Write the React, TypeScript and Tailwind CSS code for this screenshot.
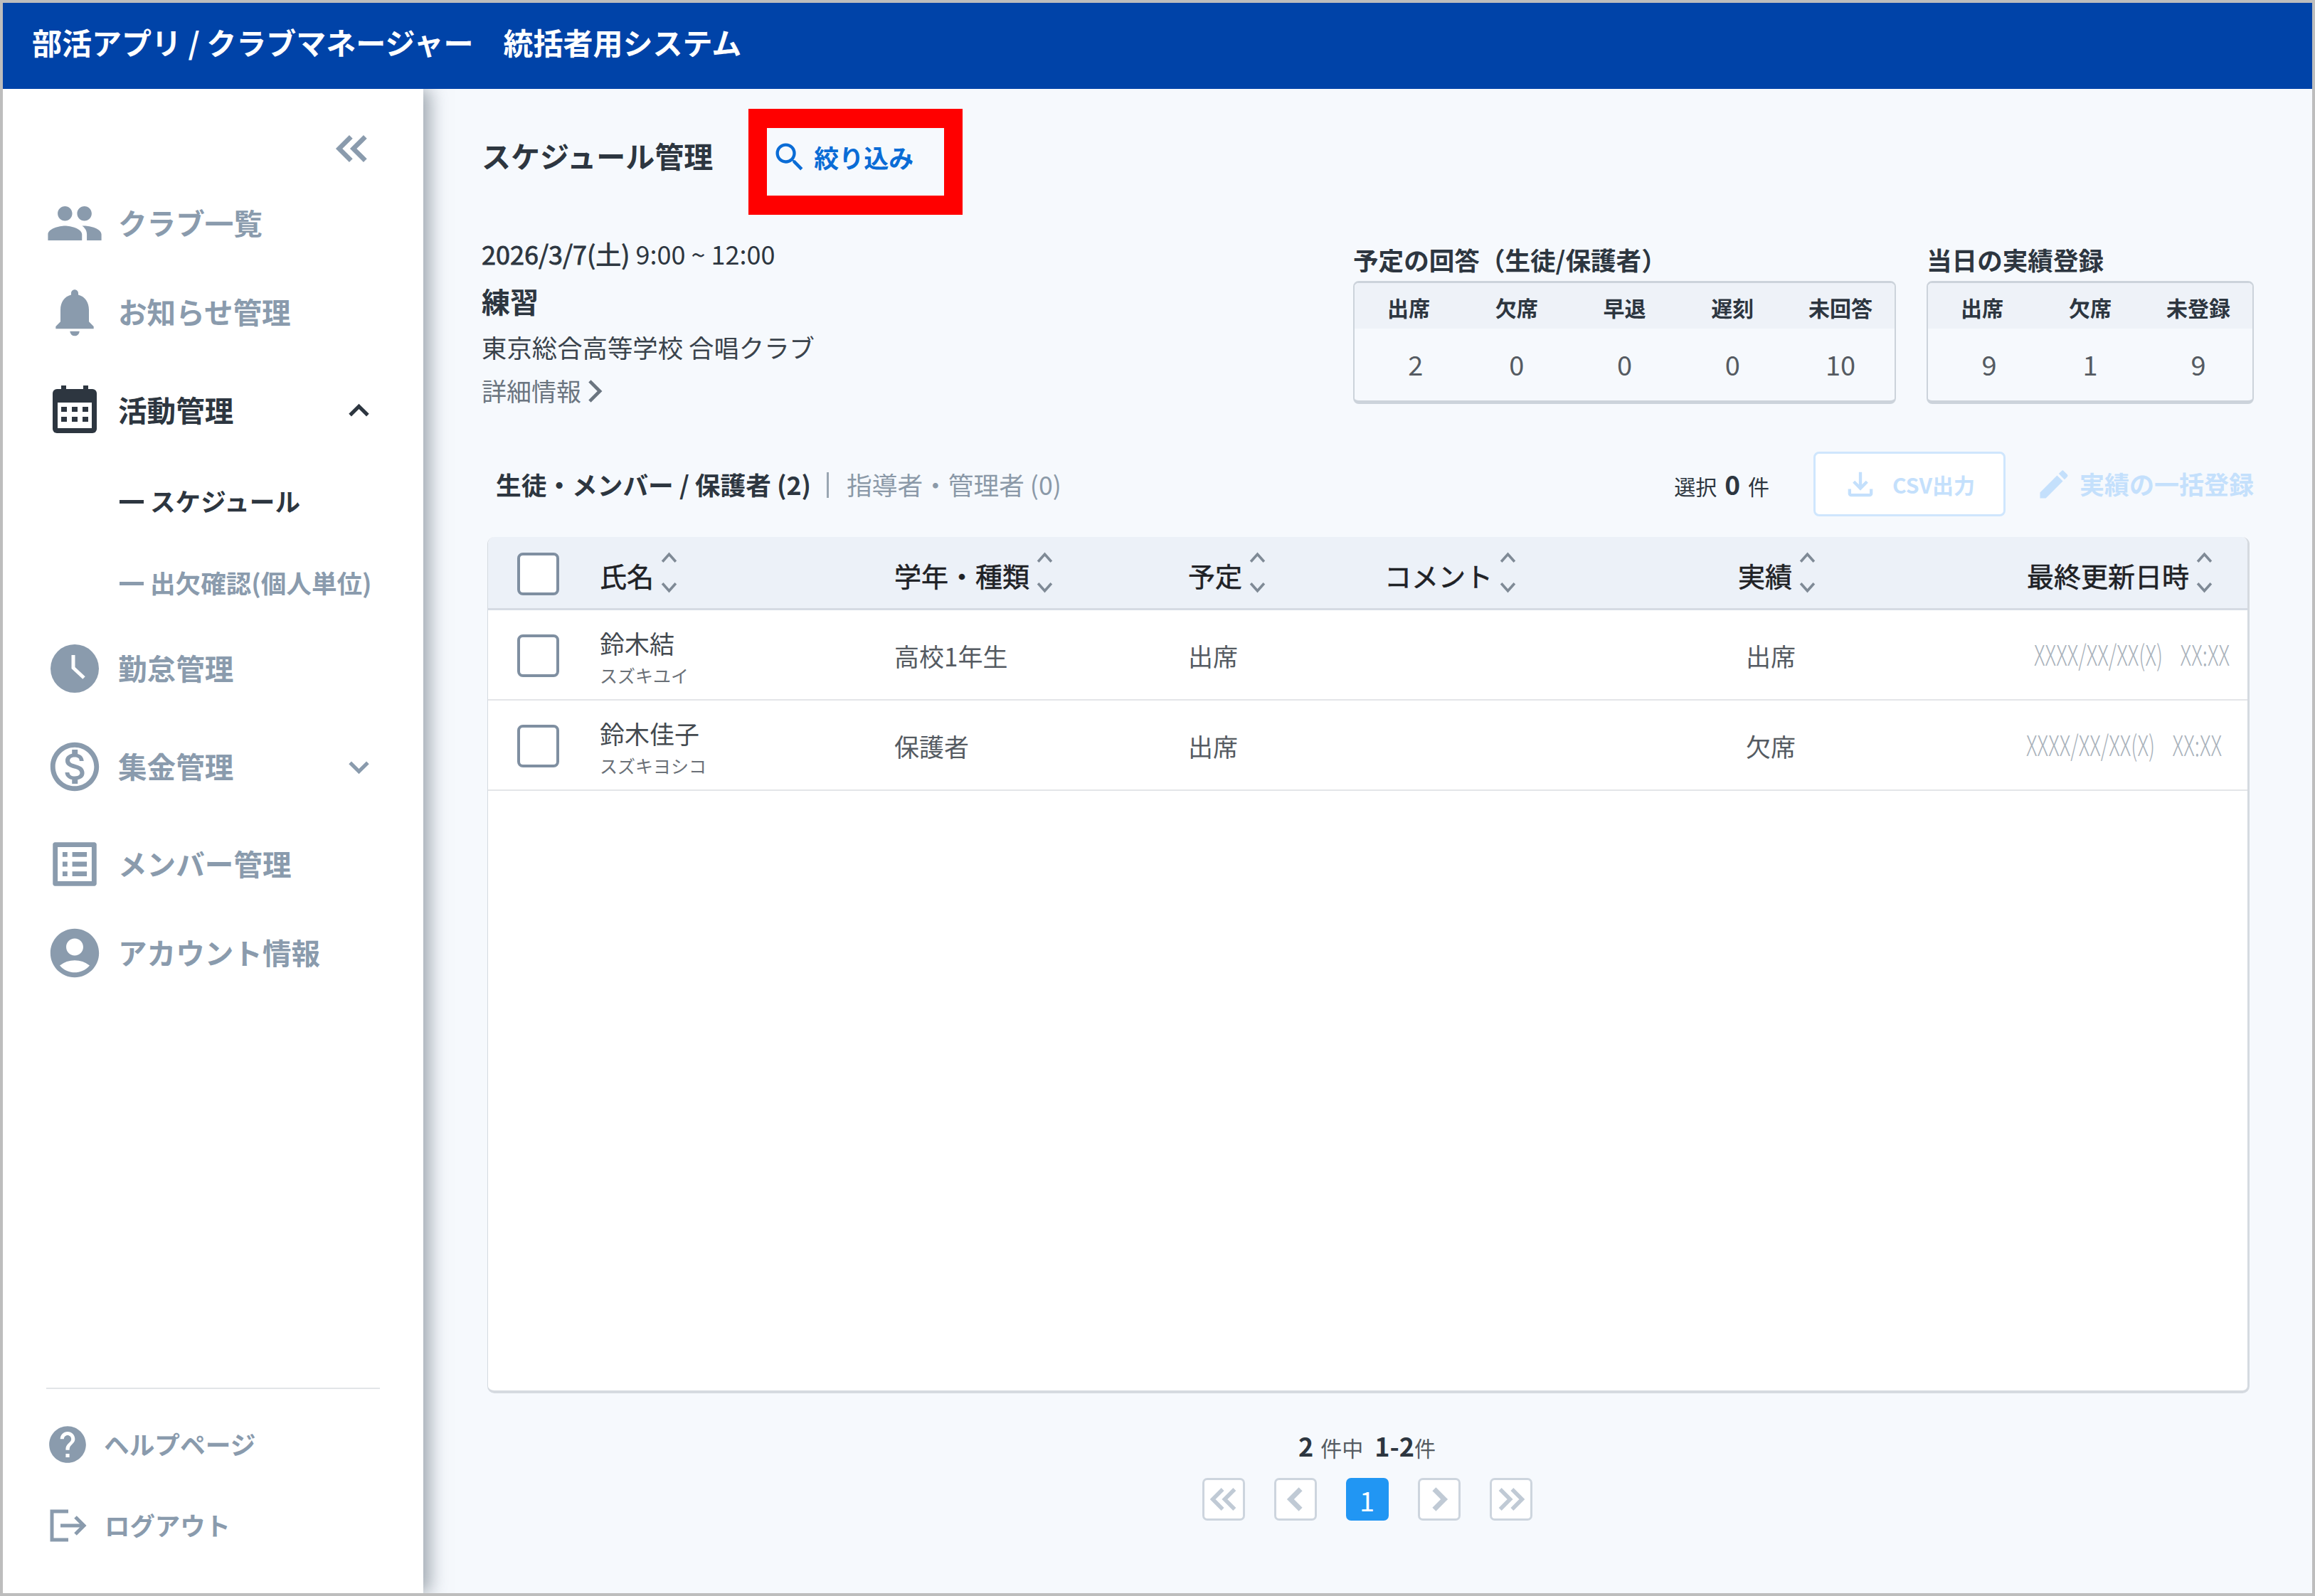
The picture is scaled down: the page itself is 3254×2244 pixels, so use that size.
import type { ReactNode } from "react";
import {
  MdPeople,
  MdNotifications,
  MdOutlineMonetizationOn,
  MdOutlineListAlt,
  MdAccountCircle,
  MdHelp,
  MdSearch,
  MdEdit,
} from "react-icons/md";

const SLATE = "#8a9bad";
const DARK = "#2d3640";

function Chevron({
  dir,
  className,
  sw = 5,
}: {
  dir: "up" | "down" | "left" | "right";
  className?: string;
  sw?: number;
}) {
  const pts = {
    up: "3,17 15,5 27,17",
    down: "3,5 15,17 27,5",
    left: "17,3 5,15 17,27",
    right: "5,3 17,15 5,27",
  }[dir];
  const box = dir === "up" || dir === "down" ? "0 0 30 22" : "0 0 22 30";
  return (
    <svg viewBox={box} className={className} fill="none" stroke="currentColor" strokeWidth={sw}>
      <polyline points={pts} />
    </svg>
  );
}

function DoubleChevron({ dir, className }: { dir: "left" | "right"; className?: string }) {
  const a = dir === "left" ? "20,3 5,18 20,33" : "5,3 20,18 5,33";
  const b = dir === "left" ? "38,3 23,18 38,33" : "23,3 38,18 23,33";
  return (
    <svg viewBox="0 0 43 36" className={className} fill="none" stroke="currentColor" strokeWidth="6">
      <polyline points={a} />
      <polyline points={b} />
    </svg>
  );
}

function CalendarIcon() {
  return (
    <svg viewBox="0 0 62 67" className="w-[62px] h-[67px] -mt-[4px]" fill="#2d3640">
      <rect x="12" y="0" width="7" height="12" />
      <rect x="43" y="0" width="7" height="12" />
      <rect x="0" y="5" width="62" height="62" rx="6" />
      <rect x="7" y="24" width="48" height="36" fill="#ffffff" />
      <rect x="12" y="30" width="8" height="7" />
      <rect x="27" y="30" width="8" height="7" />
      <rect x="42" y="30" width="8" height="7" />
      <rect x="12" y="44" width="8" height="7" />
      <rect x="27" y="44" width="8" height="7" />
      <rect x="42" y="44" width="8" height="7" />
    </svg>
  );
}

function ClockIcon() {
  return (
    <svg viewBox="0 0 68 68" className="w-[68px] h-[68px]">
      <circle cx="34" cy="34" r="34" fill={SLATE} />
      <polyline points="32,15 32,33 47,47" fill="none" stroke="#ffffff" strokeWidth="5" />
    </svg>
  );
}

function LogoutIcon() {
  return (
    <svg viewBox="0 0 52 46" className="w-[52px] h-[46px]" fill="none" stroke={SLATE} strokeWidth="5">
      <polyline points="26,3 3,3 3,43 26,43" />
      <line x1="15" y1="23" x2="47" y2="23" />
      <polyline points="36,11 48,23 36,35" />
    </svg>
  );
}

function DownloadIcon() {
  return (
    <svg viewBox="0 0 24 24" className="w-[52px] h-[52px]" fill="#c4e0fc">
      <path d="M18 15v3H6v-3H4v3c0 1.1.9 2 2 2h12c1.1 0 2-.9 2-2v-3h-2zm-1-4l-1.41-1.41L13 12.17V4h-2v8.17L8.41 9.59 7 11l5 5 5-5z" />
    </svg>
  );
}

function NavItem({
  h,
  icon,
  label,
  active,
  trailing,
}: {
  h: string;
  icon: ReactNode;
  label: string;
  active?: boolean;
  trailing?: "up" | "down";
}) {
  return (
    <div className={`${h} flex items-center pl-[60px] pr-[75px]`}>
      <span className="w-[82px] flex justify-center items-center shrink-0">{icon}</span>
      <span
        className={`ml-[20px] flex-1 pb-[2px] text-[40.6px] font-bold ${active ? "text-[#2d3640]" : "text-[#8a9bad]"}`}
      >
        {label}
      </span>
      {trailing && (
        <Chevron
          dir={trailing}
          className={`w-[31px] h-[23px] ${active ? "text-[#2d3640]" : "text-[#8a9bad]"}`}
        />
      )}
    </div>
  );
}

function SubItem({ h, label, active }: { h: string; label: string; active?: boolean }) {
  return (
    <div
      className={`${h} flex items-center pl-[164px] text-[35.6px] font-bold whitespace-nowrap ${
        active ? "text-[#2d3640]" : "text-[#8a9bad]"
      }`}
    >
      <span className="w-[34px] h-[5px] bg-current mr-[9px]" />
      <span className="pb-[2px]">{label}</span>
    </div>
  );
}

function Sidebar() {
  return (
    <aside className="w-[591px] shrink-0 bg-white flex flex-col relative z-10 shadow-[9px_0_24px_rgba(70,84,98,0.5)]">
      <div className="mt-[44px] h-[80px] flex items-center justify-end pr-[76px]">
        <DoubleChevron dir="left" className="w-[48px] h-[40px] text-[#8a9bad]" />
      </div>
      <NavItem h="h-[130px]" icon={<MdPeople size={84} color={SLATE} />} label="クラブ一覧" />
      <NavItem h="h-[120px]" icon={<MdNotifications size={80} color={SLATE} />} label="お知らせ管理" />
      <NavItem h="h-[156px]" icon={<CalendarIcon />} label="活動管理" active trailing="up" />
      <SubItem h="h-[100px]" label="スケジュール" active />
      <SubItem h="h-[130px]" label="出欠確認(個人単位)" />
      <NavItem h="h-[110px]" icon={<ClockIcon />} label="勤怠管理" />
      <NavItem
        h="h-[166px]"
        icon={<MdOutlineMonetizationOn size={82} color={SLATE} />}
        label="集金管理"
        trailing="down"
      />
      <NavItem h="h-[108px]" icon={<MdOutlineListAlt size={82} color={SLATE} />} label="メンバー管理" />
      <NavItem h="h-[142px]" icon={<MdAccountCircle size={82} color={SLATE} />} label="アカウント情報" />
      <div className="flex-1" />
      <div className="ml-[61px] w-[469px] border-t-[2px] border-[#e2e5e8]" />
      <div className="h-[156px] flex items-center pl-[60px]">
        <MdHelp size={62} color={SLATE} />
        <span className="ml-[20px] pb-[3px] text-[35.7px] font-bold text-[#8a9bad]">ヘルプページ</span>
      </div>
      <div className="h-[72px] flex items-center pl-[66px]">
        <LogoutIcon />
        <span className="ml-[25px] pb-[3px] text-[35.4px] font-bold text-[#8a9bad]">ログアウト</span>
      </div>
      <div className="h-[59px]" />
    </aside>
  );
}

function SummaryBox({
  title,
  cols,
  width,
  grid,
}: {
  title: string;
  cols: { label: string; value: string; shift: string }[];
  width: string;
  grid: string;
}) {
  return (
    <div className={`${width} mt-[12px]`}>
      <div className="h-[40px] leading-[40px] text-[35.6px] font-bold text-[#2d3640] whitespace-nowrap">
        {title}
      </div>
      <div className="mt-[10px] h-[173px] rounded-[8px] border-x-[2px] border-t-[3px] border-b-[5px] border-[#ccd3db] overflow-hidden">
        <div className={`h-[64px] bg-[#eef2f8] ${grid} pt-[5px]`}>
          {cols.map((c) => (
            <div
              key={c.label}
              className="flex items-center justify-center text-[30px] font-bold text-[#2d3640]"
            >
              {c.label}
            </div>
          ))}
        </div>
        <div className={`${grid} pt-[27px]`}>
          {cols.map((c) => (
            <div key={c.label} className={`text-center text-[38px] leading-[46px] text-[#555b62] ${c.shift}`}>
              {c.value}
            </div>
          ))}
        </div>
      </div>
    </div>
  );
}

function SortArrows() {
  return (
    <span className="ml-[9px] flex flex-col gap-[28px] text-[#7f8a96]">
      <svg viewBox="0 0 24 14" className="w-[25px] h-[15px]" fill="none" stroke="currentColor" strokeWidth="3.5">
        <polyline points="3,13 12,3 21,13" />
      </svg>
      <svg viewBox="0 0 24 14" className="w-[25px] h-[15px]" fill="none" stroke="currentColor" strokeWidth="3.5">
        <polyline points="3,1 12,11 21,1" />
      </svg>
    </span>
  );
}

function HeadCell({ label }: { label: string }) {
  return (
    <div className="flex items-center text-[38px] text-[#1f2226] whitespace-nowrap">
      <span className="pt-[6px] [-webkit-text-stroke:0.6px_currentColor]">{label}</span>
      <SortArrows />
    </div>
  );
}

function Checkbox({ className }: { className?: string }) {
  return (
    <div
      className={`w-[59px] h-[60px] mt-[3px] rounded-[8px] border-[4px] border-[#7f8fa1] bg-white ml-[41px] ${className ?? ""}`}
    />
  );
}

const GRID = "grid grid-cols-[157px_414px_413px_276px_497px_406px_minmax(0,1fr)]";

const rows = [
  { name: "鈴木結", kana: "スズキユイ", grade: "高校1年生", plan: "出席", actual: "出席", dateShift: "ml-[10px]" },
  { name: "鈴木佳子", kana: "スズキヨシコ", grade: "保護者", plan: "出席", actual: "欠席", dateShift: "-ml-[1px]" },
];

function MemberTable() {
  return (
    <div className="ml-[8px] mr-[6px] mt-[29px] h-[1204px] bg-white rounded-[10px] overflow-hidden border-r-[3px] border-b-[4px] border-l-[1px] border-[#d5dae0]">
      <div className={`${GRID} h-[103px] items-center bg-[#ecf1f8] border-b-[3px] border-[#d5dbe3]`}>
        <Checkbox />
        <HeadCell label="氏名" />
        <HeadCell label="学年・種類" />
        <HeadCell label="予定" />
        <HeadCell label="コメント" />
        <HeadCell label="実績" />
        <HeadCell label="最終更新日時" />
      </div>
      {rows.map((r) => (
        <div key={r.name} className={`${GRID} h-[127px] items-center border-b-[2px] border-[#e3e5e8]`}>
          <Checkbox />
          <div className="self-start pt-[21px]">
            <div className="h-[50px] leading-[50px] text-[35px] text-[#444a50]">{r.name}</div>
            <div className="h-[40px] leading-[40px] text-[25px] text-[#6a7077]">{r.kana}</div>
          </div>
          <div className="pt-[4px] text-[35px] text-[#555b62]">{r.grade}</div>
          <div className="pt-[4px] text-[35px] text-[#555b62]">{r.plan}</div>
          <div />
          <div className="pt-[4px] pl-[11px] text-[35px] text-[#555b62]">{r.actual}</div>
          <div
            className={`${r.dateShift} -mt-[3px] text-[40px] font-light text-[#a9b2bb] whitespace-nowrap origin-left scale-x-[0.72]`}
          >
            XXXX/XX/XX(X)<span className="ml-[34px]">XX:XX</span>
          </div>
        </div>
      ))}
    </div>
  );
}

function PageButton({ children, active }: { children: ReactNode; active?: boolean }) {
  return (
    <div
      className={`w-[60px] h-[60px] rounded-[7px] border-[3px] flex items-center justify-center ${
        active ? "bg-[#2196f3] border-[#2196f3] text-white text-[38px]" : "bg-white border-[#cdd5de] text-[#c0cad5]"
      }`}
    >
      {children}
    </div>
  );
}

function Pagination() {
  return (
    <div className="ml-[8px] mr-[10px] flex flex-col items-center">
      <div className="mt-[50px] h-[46px] leading-[46px] text-[30px] text-[#555b62] whitespace-nowrap">
        <span className="text-[36px] font-bold text-[#2d3640]">2</span>
        <span className="ml-[10px]">件中</span>
        <span className="ml-[16px] text-[36px] font-bold text-[#2d3640]">1-2</span>件
      </div>
      <div className="mt-[23px] flex gap-[41px]">
        <PageButton>
          <DoubleChevron dir="left" className="w-[40px] h-[34px]" />
        </PageButton>
        <PageButton>
          <Chevron dir="left" sw={6} className="w-[26px] h-[36px]" />
        </PageButton>
        <PageButton active>1</PageButton>
        <PageButton>
          <Chevron dir="right" sw={6} className="w-[26px] h-[36px]" />
        </PageButton>
        <PageButton>
          <DoubleChevron dir="right" className="w-[40px] h-[34px]" />
        </PageButton>
      </div>
    </div>
  );
}

export default function App() {
  return (
    <div
      className="w-[3254px] h-[2244px] border-[4px] border-[#bdbdbd] flex flex-col overflow-hidden font-['Noto_Sans_CJK_JP','Noto_Sans',sans-serif]"
      style={{ color: DARK }}
    >
      <header className="h-[121px] shrink-0 bg-[#0043a8] flex items-center pl-[41px] pb-[12px] text-[42px] font-bold text-white whitespace-nowrap relative z-20">
        部活アプリ / クラブマネージャー
        <span className="ml-[42px]">統括者用システム</span>
      </header>

      <div className="flex-1 flex min-h-0">
        <Sidebar />

        <main className="flex-1 min-w-0 bg-[#f6f9fd] pl-[82px] pr-[82px]">
          <div className="mt-[28px] flex items-center">
            <h1 className="pb-[18px] text-[41px] font-bold text-[#2d3640] whitespace-nowrap">スケジュール管理</h1>
            <div className="ml-[50px] w-[301px] h-[149px] border-x-[26px] border-y-[27px] border-[#ff0000] flex items-center pl-[6px] pb-[13px] text-[#0a6cd6]">
              <MdSearch size={52} />
              <span className="ml-[8px] text-[35px] font-bold whitespace-nowrap">絞り込み</span>
            </div>
          </div>

          <div className="mt-[31px] flex">
            <div className="flex-1">
              <div className="h-[46px] leading-[46px] text-[36px] text-[#2d3640] whitespace-nowrap">
                <span className="[-webkit-text-stroke:0.8px_currentColor]">2026/3/7(土)</span> 9:00 ~ 12:00
              </div>
              <div className="mt-[21px] h-[46px] leading-[46px] text-[40px] font-bold text-[#2d3640]">練習</div>
              <div className="mt-[19px] h-[46px] leading-[46px] text-[35.4px] text-[#3a434c] whitespace-nowrap">
                東京総合高等学校 合唱クラブ
              </div>
              <div className="mt-[15px] h-[46px] flex items-center text-[35px] text-[#6b7580]">
                詳細情報
                <Chevron dir="right" sw={4} className="ml-[6px] mt-[2px] w-[26px] h-[36px]" />
              </div>
            </div>
            <SummaryBox
              title="予定の回答（生徒/保護者）"
              width="w-[763px]"
              grid="grid grid-cols-5"
              cols={[
                { label: "出席", value: "2", shift: "pl-[20px]" },
                { label: "欠席", value: "0", shift: "" },
                { label: "早退", value: "0", shift: "" },
                { label: "遅刻", value: "0", shift: "" },
                { label: "未回答", value: "10", shift: "" },
              ]}
            />
            <div className="w-[43px]" />
            <SummaryBox
              title="当日の実績登録"
              width="w-[460px]"
              grid="grid grid-cols-3"
              cols={[
                { label: "出席", value: "9", shift: "pl-[20px]" },
                { label: "欠席", value: "1", shift: "" },
                { label: "未登録", value: "9", shift: "" },
              ]}
            />
          </div>

          <div className="mt-[63px] h-[91px] flex items-center">
            <div className="pl-[20px] flex items-center text-[35.7px] whitespace-nowrap">
              <span className="font-bold text-[#2d3640]">生徒・メンバー / 保護者 (2)</span>
              <span className="ml-[22px] mr-[25px] mt-[4px] w-[3px] h-[36px] bg-[#9aa6b2]" />
              <span className="text-[#8b99a8]">指導者・管理者 (0)</span>
            </div>
            <div className="flex-1" />
            <span className="text-[30px] text-[#2d3640] whitespace-nowrap">
              選択<span className="mx-[11px] text-[37px] font-bold">0</span>件
            </span>
            <div className="ml-[62px] w-[270px] h-[91px] rounded-[8px] border-[3px] border-[#cfe6fd] bg-white flex items-center pl-[37px]">
              <DownloadIcon />
              <span className="ml-[19px] mt-[2px] text-[30px] font-bold text-[#c4e0fc]">CSV出力</span>
            </div>
            <MdEdit size={52} color="#c4e0fc" className="ml-[42px]" />
            <span className="ml-[10px] text-[35px] font-bold text-[#c4e0fc] whitespace-nowrap">実績の一括登録</span>
          </div>

          <MemberTable />
          <Pagination />
        </main>
      </div>
    </div>
  );
}
